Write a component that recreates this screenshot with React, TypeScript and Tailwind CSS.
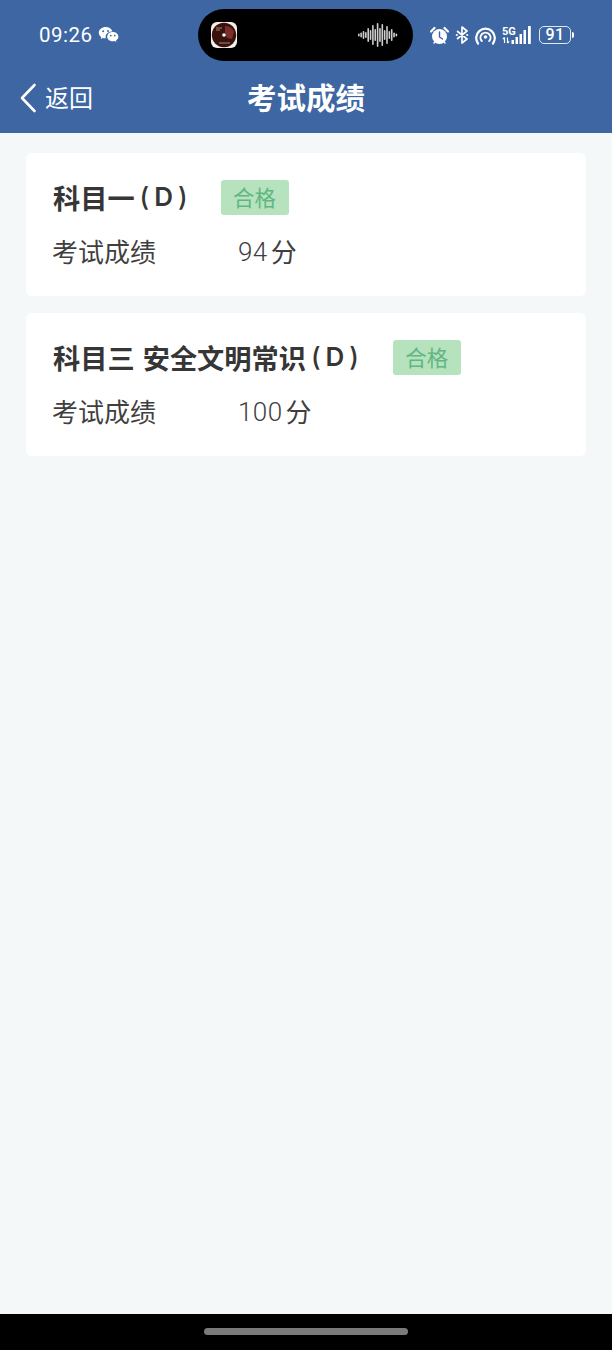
const cjk = "font-['Noto_Sans_CJK_SC',sans-serif]";

function Wave() {
  const bars = [3, 5, 8, 6, 14, 10, 20, 12, 24, 14, 22, 10, 18, 8, 12, 5, 3];
  return (
    <svg width="40" height="26" viewBox="0 0 40 26">
      {bars.map((h, i) => (
        <rect key={i} x={i * 2.35} y={13 - h / 2} width="1.6" height={h} rx="0.8" fill="#cfcfcf" />
      ))}
    </svg>
  );
}

function Album() {
  return (
    <svg width="26" height="26" viewBox="0 0 26 26">
      <rect width="26" height="26" rx="6" fill="#f4efe9" />
      <circle cx="13" cy="13" r="12.2" fill="#3a120c" />
      <path d="M14 4a9.500 9.500 0 0 1 9 6l-2 7-5-1-2-6z" fill="#7c2e2e" />
      <path d="M5 6h6M5 8h4M8 21h11" stroke="#b9a79c" strokeWidth="0.8" />
      <circle cx="13" cy="13" r="1.800" fill="#fff" />
    </svg>
  );
}

function WeChat() {
  return (
    <svg width="21" height="18" viewBox="0 0 21 18" fill="#fff">
      <path d="M7.800 1C3.900 1 .8 3.500.8 6.700c0 1.800 1 3.300 2.500 4.400l-.6 1.900 2.200-1.100c.8.200 1.600.4 2.400.4h.6c-.2-.5-.3-1-.3-1.500 0-3 2.900-5.300 6.400-5.300h.5C13.800 2.900 11 1 7.800 1z" />
      <path d="M20.400 10.700c0-2.600-2.500-4.600-5.600-4.600s-5.600 2-5.600 4.600 2.500 4.600 5.600 4.600c.6 0 1.300-.1 1.900-.3l1.800.9-.5-1.500c1.500-.9 2.400-2.100 2.400-3.700z" />
      <circle cx="5.200" cy="5.200" r="1" fill="#3d66a3" />
      <circle cx="10" cy="5" r="1" fill="#3d66a3" />
      <circle cx="12.800" cy="9.600" r=".9" fill="#3d66a3" />
      <circle cx="16.800" cy="9.600" r=".9" fill="#3d66a3" />
    </svg>
  );
}

function StatusIcons() {
  return (
    <div className="flex items-center h-[20px]">
      {/* alarm */}
      <svg width="19" height="19" viewBox="0 0 19 19" fill="none" className="shrink-0">
        <circle cx="9.500" cy="10.500" r="7.500" fill="#fff" />
        <path d="M1 5.500 4.500 2M18 5.500 14.500 2" stroke="#fff" strokeWidth="2.200" strokeLinecap="round" />
        <path d="M9.500 6v5l3 2" stroke="#3d66a3" strokeWidth="1.400" strokeLinecap="round" />
        <path d="M4 17l1.500-1.500M15 17l-1.500-1.500" stroke="#fff" strokeWidth="1.600" strokeLinecap="round" />
      </svg>
      {/* bluetooth */}
      <svg width="14" height="18" viewBox="0 0 14 18" fill="none" className="ml-[6px] shrink-0">
        <path d="M2 5l10 8-5 4V1l5 4L2 13" stroke="#fff" strokeWidth="1.700" strokeLinejoin="round" />
        <circle cx="1.800" cy="9" r="1.100" fill="#fff" />
        <circle cx="12.200" cy="9" r="1.100" fill="#fff" />
      </svg>
      {/* hotspot */}
      <svg width="21" height="19" viewBox="0 0 21 19" fill="none" className="ml-[6px] shrink-0">
        <path d="M3 17.500a9.300 9.300 0 1 1 15 0" stroke="#fff" strokeWidth="2.200" strokeLinecap="round" />
        <path d="M6.800 15a5 5 0 1 1 7.400 0" stroke="#fff" strokeWidth="2" strokeLinecap="round" />
        <circle cx="10.500" cy="11" r="1.800" fill="#fff" />
      </svg>
      {/* 5G signal */}
      <svg width="30" height="20" viewBox="0 0 30 20" className="ml-[6px] shrink-0">
        <text x="0" y="9.500" fontSize="11" fontWeight="700" fill="#fff" fontFamily="Roboto, sans-serif">5G</text>
        <path d="M2.500 12.500v5.500M.8 14.200l1.700-1.700M5.500 18v-5.500M7.200 16.300 5.500 18" stroke="#fff" strokeWidth="1.200" fill="none" />
        <rect x="9.500" y="15" width="2.500" height="4" fill="#fff" />
        <rect x="13.500" y="12" width="2.500" height="7" fill="#fff" />
        <rect x="17.500" y="9" width="2.500" height="10" fill="#fff" />
        <rect x="21.500" y="5" width="2.500" height="14" fill="#fff" />
        <rect x="26" y="1" width="2.800" height="18" fill="#fff" />
      </svg>
      {/* battery */}
      <div className="ml-[7px] flex items-center shrink-0">
        <div className="w-[32px] h-[18px] rounded-[5px] border-[1.500px] border-white/85 overflow-hidden flex items-center justify-center">
          <span className="text-white text-[16px] leading-none font-medium font-['Roboto',sans-serif] tracking-[0.5px]">91</span>
        </div>
        <div className="ml-[1px] w-[2px] h-[6px] bg-white rounded-r-sm" />
      </div>
    </div>
  );
}

function Card({ title, score, tagGap }: { title: string; score: string; tagGap: string }) {
  return (
    <div className={`bg-white rounded-[6px] h-[143px] pl-[26px] pt-[27px] ${cjk}`}>
      <div className="flex items-center h-[35px]">
        <div className="flex items-center h-[35px] pb-[2px] pl-[1px] text-[#363636]">
          <span className="text-[27.200px] leading-[32px] font-bold whitespace-pre [word-spacing:2px]">{title}</span>
          <span className="font-['Inter',sans-serif] text-[26px] leading-[32px] font-medium ml-[5px]">(</span>
          <span className="font-['Inter',sans-serif] text-[26px] leading-[32px] font-semibold ml-[5px]">D</span>
          <span className="font-['Inter',sans-serif] text-[26px] leading-[32px] font-medium ml-[5px]">)</span>
        </div>
        <span className={`${tagGap} w-[68px] h-[35px] rounded-[3px] bg-[#b6e3be] text-[#62b683] text-[21.500px] leading-[33px] text-center`}>合格</span>
      </div>
      <div className="flex items-center mt-[17px] h-[36px] text-[#3f3f3f]">
        <span className="w-[186px] text-[26px]">考试成绩</span>
        <span className="font-['Roboto',sans-serif] text-[26px] font-[350] tracking-[0.4px] mt-[4px]">{score}</span>
        <span className="ml-[3px] text-[26px]">分</span>
      </div>
    </div>
  );
}

export default function App() {
  return (
    <div className={`w-[612px] h-[1350px] flex flex-col bg-[#f4f8f9] ${cjk}`}>
      <div className="bg-[#3d66a3] h-[133px] shrink-0">
        <div className="h-[70px] flex items-start">
          <div className="ml-[39px] mt-[21px] w-[159px] flex items-center gap-[5px] text-white">
            <span className="text-[20.500px] leading-[28px] font-[450] font-['Roboto',sans-serif] tracking-[0.5px]">09:26</span>
            <WeChat />
          </div>
          <div className="mt-[9px] w-[215px] h-[52px] rounded-full bg-black flex items-center justify-between pl-[13px] pr-[15px]">
            <Album />
            <Wave />
          </div>
          <div className="ml-[17px] mt-[25px]">
            <StatusIcons />
          </div>
        </div>
        <div className="flex items-center h-[56px] relative">
          <svg width="18" height="30" viewBox="0 0 18 30" fill="none" className="ml-[19px]">
            <path d="M15.500 2 3 15l12.500 13" stroke="#fff" strokeWidth="2.600" strokeLinecap="round" strokeLinejoin="round" />
          </svg>
          <span className="ml-[8px] pb-[3px] text-white text-[24px] leading-none">返回</span>
          <span className="absolute left-0 right-0 pb-[2px] text-center text-white text-[29.500px] font-bold leading-none">考试成绩</span>
        </div>
      </div>

      <div className="flex-1 px-[26px] pt-[20px] flex flex-col gap-[17px]">
        <Card title="科目一" score="94" tagGap="ml-[33px]" />
        <Card title="科目三 安全文明常识" score="100" tagGap="ml-[34px]" />
      </div>

      <div className="h-[36px] bg-black shrink-0 flex justify-center pt-[14px]">
        <div className="w-[204px] h-[7px] rounded-full bg-[#7a7a7a]" />
      </div>
    </div>
  );
}
